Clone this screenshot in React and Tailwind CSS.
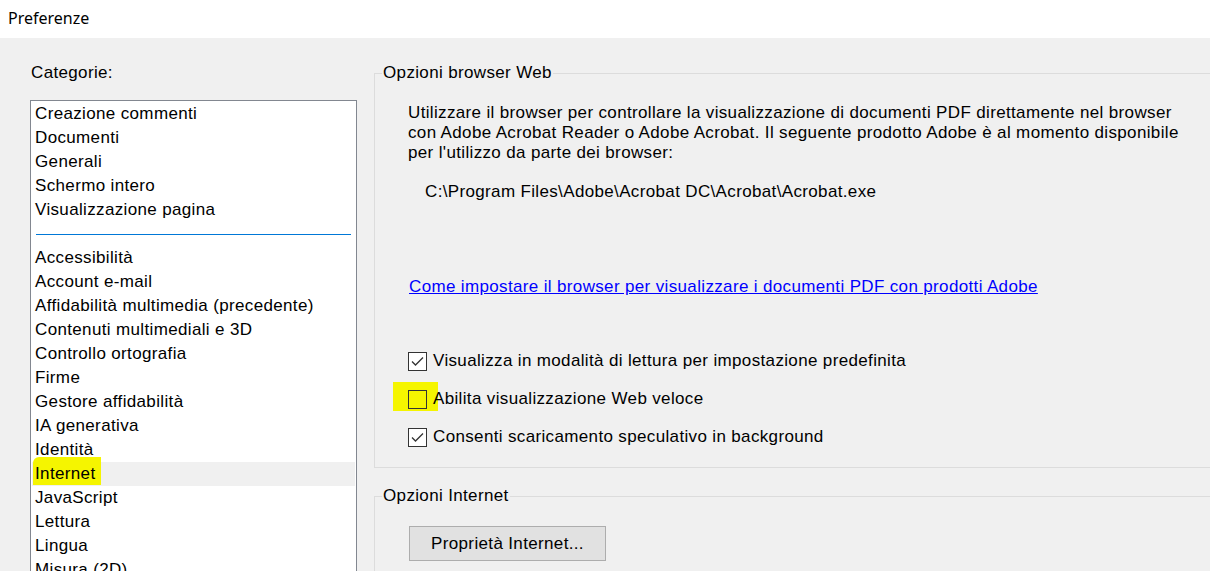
const categoriesTop = [
  "Creazione commenti",
  "Documenti",
  "Generali",
  "Schermo intero",
  "Visualizzazione pagina",
];

const categoriesBottom = [
  "Accessibilità",
  "Account e-mail",
  "Affidabilità multimedia (precedente)",
  "Contenuti multimediali e 3D",
  "Controllo ortografia",
  "Firme",
  "Gestore affidabilità",
  "IA generativa",
  "Identità",
  "Internet",
  "JavaScript",
  "Lettura",
  "Lingua",
  "Misura (2D)",
  "Misura (3D)",
];

function Checkbox({ checked, marked }) {
  return (
    <span className="relative mr-[6px] flex h-[19px] w-[19px] shrink-0">
      {marked && (
        <span className="absolute -left-[15px] -top-[8px] h-[29px] w-[45px] bg-[#f5f500]" />
      )}
      <span
        className={`relative flex h-[19px] w-[19px] items-center justify-center border border-[#333333] ${
          marked ? "bg-[#f5f500]" : "bg-white"
        }`}
      >
        {checked && (
          <svg width="17" height="17" viewBox="0 0 17 17" fill="none">
            <path
              d="M3 8.5l3.5 3.5L14 4.5"
              stroke="#333333"
              strokeWidth="1.3"
            />
          </svg>
        )}
      </span>
    </span>
  );
}

function CheckRow({ label, checked = false, marked = false }) {
  return (
    <div className="flex h-[38px] items-center">
      <Checkbox checked={checked} marked={marked} />
      <span className="relative">{label}</span>
    </div>
  );
}

function CategoryItem({ name }) {
  const selected = name === "Internet";
  return (
    <div
      className={`h-[24px] whitespace-nowrap pl-[3px] leading-[24px] ${
        selected ? "bg-[#f0f0f0]" : ""
      }`}
    >
      {selected ? (
        <span className="relative">
          <span className="absolute -left-[2px] -top-[7px] h-[28px] w-[68px] rounded-tl-[6px] bg-[#f5f500]" />
          <span className="relative">{name}</span>
        </span>
      ) : (
        name
      )}
    </div>
  );
}

export default function App() {
  return (
    <div className="flex h-[571px] w-[1210px] flex-col overflow-hidden bg-[#f0f0f0] font-['Liberation_Sans',Arial,sans-serif] text-[17px] tracking-[0.35px] text-black">
      <div className="flex h-[38px] shrink-0 items-center bg-white pl-[8px] pb-[3px] font-['Noto_Sans',sans-serif] text-[16px] tracking-normal">
        Preferenze
      </div>

      <div className="flex flex-1">
        <div className="flex w-[357px] shrink-0 flex-col pl-[30px] pt-[25px]">
          <div className="pl-[1px] leading-[20px]">Categorie:</div>
          <div className="mt-[17px] h-[500px] border border-[#828790] bg-white p-px">
            {categoriesTop.map((c) => (
              <CategoryItem key={c} name={c} />
            ))}
            <div className="flex h-[24px] items-center px-[4px]">
              <div className="h-px w-full bg-[#0078d7]" />
            </div>
            {categoriesBottom.map((c) => (
              <CategoryItem key={c} name={c} />
            ))}
          </div>
        </div>

        <div className="-mr-[30px] ml-[17px] flex flex-1 flex-col pt-[25px]">
          <fieldset className="border border-[#dcdcdc] pb-[11px]">
            <legend className="ml-[7px] px-[1px] leading-[20px]">
              Opzioni browser Web
            </legend>
            <div className="pl-[33px]">
              <p className="mt-[20px] whitespace-nowrap leading-[20px]">
                Utilizzare il browser per controllare la visualizzazione di documenti PDF direttamente nel browser
                <br />
                con Adobe Acrobat Reader o Adobe Acrobat. Il seguente prodotto Adobe è al momento disponibile
                <br />
                per l'utilizzo da parte dei browser:
              </p>
              <div className="mt-[19px] pl-[17px] leading-[20px]">
                C:\Program Files\Adobe\Acrobat DC\Acrobat\Acrobat.exe
              </div>
              <a
                href="#"
                className="mt-[75px] block pl-px leading-[20px] text-[#0000ff] underline"
              >
                Come impostare il browser per visualizzare i documenti PDF con prodotti Adobe
              </a>
              <div className="mt-[45px]">
                <CheckRow
                  label="Visualizza in modalità di lettura per impostazione predefinita"
                  checked
                />
                <CheckRow label="Abilita visualizzazione Web veloce" marked />
                <CheckRow
                  label="Consenti scaricamento speculativo in background"
                  checked
                />
              </div>
            </div>
          </fieldset>

          <fieldset className="mt-[18px] h-[120px] border border-[#dcdcdc]">
            <legend className="ml-[7px] px-[1px] leading-[20px]">
              Opzioni Internet
            </legend>
            <div className="pl-[34px]">
              <button className="mt-[20px] h-[35px] w-[197px] border border-[#adadad] bg-[#e1e1e1] text-center">
                Proprietà Internet...
              </button>
            </div>
          </fieldset>
        </div>
      </div>
    </div>
  );
}
